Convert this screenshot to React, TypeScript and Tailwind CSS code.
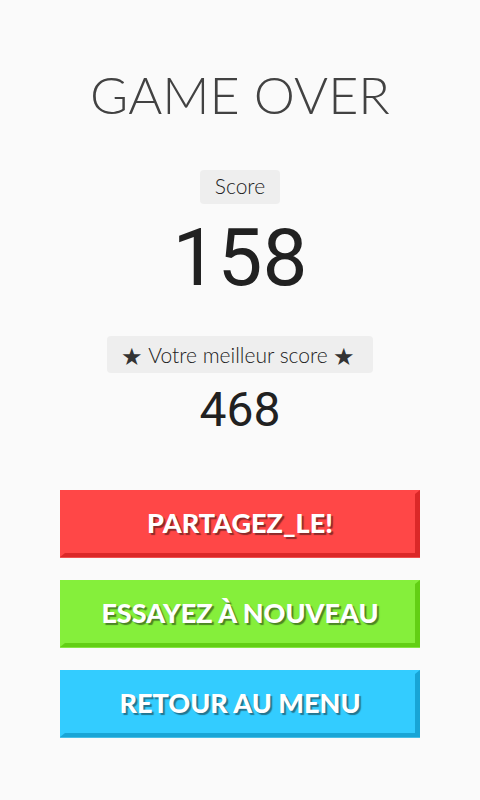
type ActionProps = { label: string; tone: string };

const tones = {
  red: "bg-[#ff4747] border-t-[#ff4747] border-l-[#ff4747] border-r-[#db2828] border-b-[#db2828] shadow-[0_1px_0_#ee5050] [text-shadow:2px_2px_1px_#8c2a2a]",
  green:
    "bg-[#85ef3b] border-t-[#85ef3b] border-l-[#85ef3b] border-r-[#62cf14] border-b-[#62cf14] shadow-[0_1px_0_#85e545] [text-shadow:2px_2px_1px_#4c8525]",
  blue: "bg-[#33ccff] border-t-[#33ccff] border-l-[#33ccff] border-r-[#18a5d6] border-b-[#18a5d6] shadow-[0_1px_0_#48bde5] [text-shadow:2px_2px_1px_#237590]",
};

function Action({ label, tone }: ActionProps) {
  return (
    <button
      type="button"
      className={`h-[67px] w-full border-x-[5px] border-y-4 pb-0.5 text-center text-[27px] leading-8 font-black whitespace-nowrap text-white ${tone}`}
    >
      {label}
    </button>
  );
}

export default function App() {
  return (
    <main className="flex min-h-screen flex-col items-center bg-[#fafafa] px-[60px] pt-[62px] pb-[62px] font-['Lato','Liberation_Sans',sans-serif] text-[#212121]">
      <h1 className="text-[52px] leading-[64px] font-light whitespace-nowrap text-[#424242]">GAME OVER</h1>

      <section className="mt-11 flex flex-col items-center">
        <h2 className="flex h-[34px] items-center rounded bg-[#eeeeee] px-[15px] pb-0.5 text-[21px] leading-6 font-light">Score</h2>
        <p className="mt-2 font-['Roboto',sans-serif] text-[80px] leading-[92px]">158</p>
      </section>

      <section className="mt-8 flex flex-col items-center">
        <h2 className="flex h-[37px] items-center gap-[5px] rounded bg-[#eeeeee] pr-[18px] pl-[14px] text-[21px] leading-6 font-light whitespace-nowrap">
          <span className="pt-1 font-['DejaVu_Sans',sans-serif] text-2xl leading-6 text-[#333]">★</span>
          Votre meilleur score
          <span className="pt-1 font-['DejaVu_Sans',sans-serif] text-2xl leading-6 text-[#333]">★</span>
        </h2>
        <p className="mt-2 font-['Roboto',sans-serif] text-[48px] leading-[58px]">468</p>
      </section>

      <nav className="mt-[51px] flex w-full flex-col gap-[23px]">
        <Action label="PARTAGEZ_LE!" tone={tones.red} />
        <Action label="ESSAYEZ À NOUVEAU" tone={tones.green} />
        <Action label="RETOUR AU MENU" tone={tones.blue} />
      </nav>
    </main>
  );
}
